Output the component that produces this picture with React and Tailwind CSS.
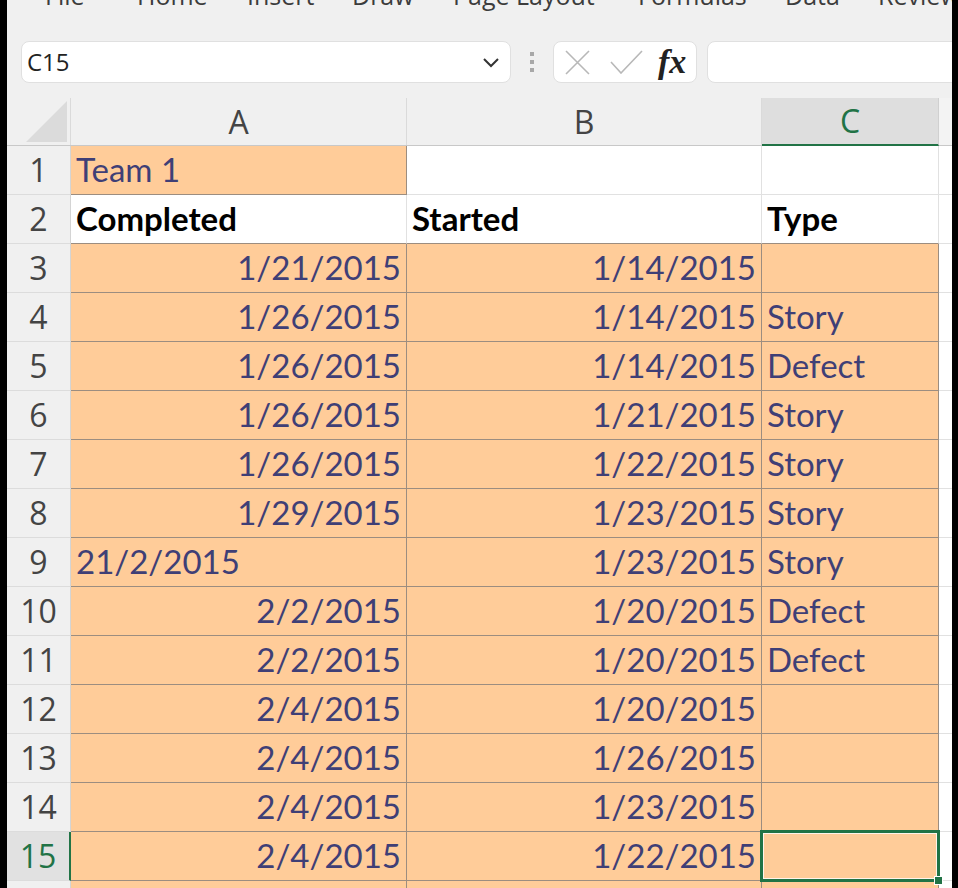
import clsx from "clsx";

const menu = [
  { label: "File", w: "w-[92px]" },
  { label: "Home", w: "w-[110px]" },
  { label: "Insert", w: "w-[105px]" },
  { label: "Draw", w: "w-[101px]" },
  { label: "Page Layout", w: "w-[185px]" },
  { label: "Formulas", w: "w-[147px]" },
  { label: "Data", w: "w-[93px]" },
  { label: "Review", w: "w-[90px]" },
];

const rows = [
  { a: "Team 1", b: "", c: "", aRight: false },
  { a: "Completed", b: "Started", c: "Type", header: true },
  { a: "1/21/2015", b: "1/14/2015", c: "" },
  { a: "1/26/2015", b: "1/14/2015", c: "Story" },
  { a: "1/26/2015", b: "1/14/2015", c: "Defect" },
  { a: "1/26/2015", b: "1/21/2015", c: "Story" },
  { a: "1/26/2015", b: "1/22/2015", c: "Story" },
  { a: "1/29/2015", b: "1/23/2015", c: "Story" },
  { a: "21/2/2015", b: "1/23/2015", c: "Story", aRight: false },
  { a: "2/2/2015", b: "1/20/2015", c: "Defect" },
  { a: "2/2/2015", b: "1/20/2015", c: "Defect" },
  { a: "2/4/2015", b: "1/20/2015", c: "" },
  { a: "2/4/2015", b: "1/26/2015", c: "" },
  { a: "2/4/2015", b: "1/23/2015", c: "" },
  { a: "2/4/2015", b: "1/22/2015", c: "" },
  { a: "", b: "", c: "" },
];

const isOrange = (r, col) => {
  if (r === 0) return col === 0;
  if (r === 1) return false;
  return col < 3;
};

const Cell = ({ w, orange, right, bold, rightDark, bottomDark, children, selected }) => (
  <div
    className={clsx(
      "relative h-full flex items-center shrink-0 border-r border-b px-[5px] whitespace-nowrap",
      w,
      orange ? "bg-[#ffcc99]" : "bg-white",
      rightDark ? "border-r-[#9c8d80]" : "border-r-[#e1e1e1]",
      bottomDark ? "border-b-[#9c8d80]" : "border-b-[#e1e1e1]",
      right ? "justify-end" : "justify-start",
      bold ? "font-bold text-black" : "text-[#3f3f76]",
      selected && "z-10"
    )}
  >
    {children}
    {selected && (
      <div className="absolute -left-[2px] -top-[2px] -right-[2px] -bottom-[2px] border-[3px] border-[#217346]">
        <div className="w-full h-full border border-white/80"></div>
        <div className="absolute -right-[6px] -bottom-[6px] w-[9px] h-[9px] bg-[#217346] border border-white"></div>
      </div>
    )}
  </div>
);

const App = () => {
  const colW = ["w-[336px]", "w-[355px]", "w-[177px]"];

  return (
    <div className="w-[958px] h-[888px] bg-black flex overflow-hidden">
      <div className="ml-[7px] w-[945px] h-full bg-[#f0f0f0] flex flex-col overflow-hidden">
        {/* Ribbon tabs (cut off at top) */}
        <div className="h-[41px] shrink-0 overflow-hidden">
          <div className="flex pl-[38px] -mt-[20px] text-[25px] leading-[30px] text-[#3c3c3c] font-['Open_Sans',sans-serif] whitespace-nowrap">
            {menu.map((m) => (
              <span key={m.label} className={clsx("shrink-0", m.w)}>
                {m.label}
              </span>
            ))}
          </div>
        </div>

        {/* Formula bar */}
        <div className="h-[42px] shrink-0 flex pl-[14px] font-['Open_Sans',sans-serif]">
          <div className="w-[490px] shrink-0 bg-white border border-[#e0e0e0] rounded-[8px] flex items-center justify-between pl-[5px] pr-[10px]">
            <span className="text-[24px] text-[#222]">C15</span>
            <svg width="18" height="12" viewBox="0 0 18 12">
              <polyline points="2,3 9,10 16,3" fill="none" stroke="#333" strokeWidth="2" />
            </svg>
          </div>
          <div className="w-[42px] shrink-0 flex flex-col items-center justify-center gap-[4px]">
            <div className="w-[4px] h-[4px] bg-[#a8a8a8]"></div>
            <div className="w-[4px] h-[4px] bg-[#a8a8a8]"></div>
            <div className="w-[4px] h-[4px] bg-[#a8a8a8]"></div>
          </div>
          <div className="w-[144px] shrink-0 bg-white border border-[#e0e0e0] rounded-[8px] flex items-center pl-[11px] gap-[20px]">
            <svg width="25" height="25" viewBox="0 0 25 25">
              <path d="M1 1 L24 24 M24 1 L1 24" stroke="#b8b8b8" strokeWidth="1.6" fill="none" />
            </svg>
            <svg width="33" height="24" viewBox="0 0 33 24">
              <polyline points="1,12 11,23 32,1" stroke="#b8b8b8" strokeWidth="1.6" fill="none" />
            </svg>
            <span className="text-[34px] italic font-semibold text-[#222] font-['Liberation_Serif',serif] -ml-[5px] leading-none">fx</span>
          </div>
          <div className="ml-[10px] flex-1 -mr-[20px] bg-white border border-[#e0e0e0] rounded-[8px]"></div>
        </div>

        <div className="h-[15px] shrink-0"></div>

        {/* Grid */}
        <div className="flex-1 flex flex-col overflow-hidden">
          {/* Column headers */}
          <div className="h-[48px] shrink-0 flex border-b border-[#c8c8c8] text-[32px] text-[#444] font-['Open_Sans',sans-serif]">
            <div className="w-[64px] shrink-0 border-r border-[#dadada] flex items-end justify-end pb-[2px] pr-[2px]">
              <svg width="42" height="42" viewBox="0 0 42 42">
                <polygon points="0,41 41,41 41,0" fill="#dbdbdb" />
              </svg>
            </div>
            <div className="w-[336px] shrink-0 border-r border-[#dadada] flex items-center justify-center">A</div>
            <div className="w-[355px] shrink-0 border-r border-[#dadada] flex items-center justify-center">B</div>
            <div className="w-[177px] shrink-0 bg-[#dedede] border-r border-[#d0d0d0] border-b-2 border-b-[#217346] -mb-[1px] flex items-center justify-center text-[#217346]">
              C
            </div>
            <div className="flex-1 bg-[#f3f3f3]"></div>
          </div>

          {rows.map((r, i) => {
            const sel = i === 14;
            return (
              <div key={i} className="h-[49px] shrink-0 flex text-[33px] font-['Lato',sans-serif]">
                <div
                  className={clsx(
                    "w-[64px] shrink-0 flex items-center justify-center border-b border-[#dcdcdc] text-[32px] font-['Open_Sans',sans-serif]",
                    sel
                      ? "bg-[#e1e1e1] text-[#217346] border-r-2 border-r-[#217346]"
                      : "bg-[#f0f0f0] text-[#444] border-r border-r-[#d4d4d4]"
                  )}
                >
                  {i + 1}
                </div>
                {[r.a, r.b, r.c].map((v, c) => {
                  const orange = isOrange(i, c);
                  const rightOrange = c < 2 ? isOrange(i, c + 1) : false;
                  const belowOrange = i + 1 < rows.length ? isOrange(i + 1, c) : orange;
                  const right = !r.header && (c === 0 ? r.aRight !== false : c === 1);
                  return (
                    <Cell
                      key={c}
                      w={colW[c]}
                      orange={orange}
                      right={right}
                      bold={r.header}
                      rightDark={orange || rightOrange}
                      bottomDark={orange || belowOrange}
                      selected={sel && c === 2}
                    >
                      {v}
                    </Cell>
                  );
                })}
                <div className="flex-1 bg-white border-b border-[#e1e1e1]"></div>
              </div>
            );
          })}
        </div>
      </div>
    </div>
  );
};

export default App;
